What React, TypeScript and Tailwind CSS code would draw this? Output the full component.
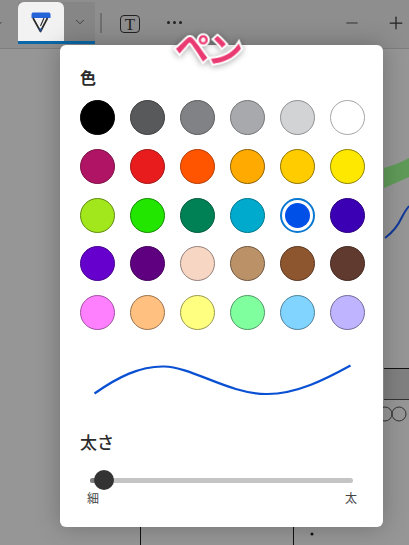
import { ChevronDown, Minus, Plus } from "lucide-react";

// パレットの色 (6列 x 5行)
const swatches = [
  { id: "black", cls: "bg-[#000000] border-black" },
  { id: "gray-1", cls: "bg-[#58595b] border-[#3c3d3e]" },
  { id: "gray-2", cls: "bg-[#808285] border-[#5a5b5d]" },
  { id: "gray-3", cls: "bg-[#a7a9ac] border-[#757678]" },
  { id: "gray-4", cls: "bg-[#d1d3d4] border-[#8f9091]" },
  { id: "white", cls: "bg-white border-[#a6a6a6]" },
  { id: "magenta", cls: "bg-[#b01464] border-[#7b0e46]" },
  { id: "red", cls: "bg-[#e81c1c] border-[#a21414]" },
  { id: "orange", cls: "bg-[#ff5500] border-[#b23b00]" },
  { id: "amber", cls: "bg-[#ffaa00] border-[#8a6000]" },
  { id: "gold", cls: "bg-[#ffcc00] border-[#8f7200]" },
  { id: "yellow", cls: "bg-[#ffe800] border-[#8f8200]" },
  { id: "lime", cls: "bg-[#a2e61c] border-[#5f8a10]" },
  { id: "green", cls: "bg-[#22e600] border-[#148a00]" },
  { id: "teal", cls: "bg-[#008055] border-[#005a3b]" },
  { id: "cyan", cls: "bg-[#00aacc] border-[#00778e]" },
  { id: "blue", cls: "bg-[#0050e8]", selected: true },
  { id: "indigo", cls: "bg-[#3c00b4] border-[#2a007e]" },
  { id: "violet", cls: "bg-[#6600cc] border-[#47008e]" },
  { id: "purple", cls: "bg-[#5f0080] border-[#42005a]" },
  { id: "peach", cls: "bg-[#f7d7c4] border-[#94807a]" },
  { id: "tan", cls: "bg-[#bb9167] border-[#705640]" },
  { id: "brown", cls: "bg-[#8e562e] border-[#5a3620]" },
  { id: "dark-brown", cls: "bg-[#603a2e] border-[#432820]" },
  { id: "pink", cls: "bg-[#ff80ff] border-[#a052a0]" },
  { id: "light-orange", cls: "bg-[#ffc080] border-[#997350]" },
  { id: "light-yellow", cls: "bg-[#ffff80] border-[#999950]" },
  { id: "mint", cls: "bg-[#80ff9f] border-[#4f9963]" },
  { id: "sky", cls: "bg-[#80d4ff] border-[#4f8299]" },
  { id: "lavender", cls: "bg-[#bfb4ff] border-[#736c99]" },
];

function PenIcon() {
  return (
    <svg width="24" height="26" viewBox="0 0 24 26" fill="none">
      <path d="M2.5 5 L3.5 3.5 H20.5 L21.5 5 V9 H2.5 Z" fill="#2563d8" />
      <path d="M4 9 L11.5 22.5 L18.5 9" stroke="#2b2b2b" strokeWidth="1.7" strokeLinejoin="round" />
      <path d="M11.5 17 L15 9" stroke="#2b2b2b" strokeWidth="1.1" />
      <path d="M9.8 19.5 L11.5 23 L13.2 19.5 Z" fill="#1f4fa8" />
    </svg>
  );
}

export default function App() {
  return (
    <div className="relative flex h-[545px] w-[409px] flex-col overflow-hidden bg-[#969696] font-['Noto_Sans_CJK_JP',sans-serif]">
      {/* ツールバー */}
      <header className="flex h-[49px] items-start border-b border-[#7e7e7e] bg-[#8e8e8e]">
        <ChevronDown className="mt-[18px] ml-[-8px] h-[12px] w-[12px] text-[#333333]" />
        <div className="mt-[2px] ml-[14px] flex h-[42px] border-b-[3px] border-[#0b68a8] bg-[#868686]">
          <button className="flex w-[46px] items-center justify-center rounded-t-[6px] bg-[#f2f2f2]">
            <PenIcon />
          </button>
          <button className="flex w-[31px] items-center justify-center">
            <ChevronDown className="h-[14px] w-[14px] text-[#333333]" strokeWidth={1.5} />
          </button>
        </div>
        <div className="mt-[13px] ml-[5px] h-[20px] w-[2px] bg-[#6f6f6f]" />
        <div className="mt-[15px] ml-[18px] flex h-[18px] w-[20px] items-center justify-center rounded-[4px] border border-[#222222] font-['Liberation_Serif',serif] text-[17px] leading-none text-[#222222]">
          T
        </div>
        <div className="mt-[21px] ml-[27px] flex gap-[3px]">
          <span className="h-[3px] w-[3px] rounded-full bg-[#222222]" />
          <span className="h-[3px] w-[3px] rounded-full bg-[#222222]" />
          <span className="h-[3px] w-[3px] rounded-full bg-[#222222]" />
        </div>
        <Minus className="mt-[14px] ml-[161px] h-[18px] w-[18px] text-[#333333]" strokeWidth={1.5} />
        <Plus className="mt-[13px] ml-[25px] h-[20px] w-[20px] text-[#222222]" strokeWidth={1.5} />
      </header>

      {/* 背景のキャンバス */}
      <div className="relative flex-1">
        <svg className="absolute inset-0" width="409" height="496" viewBox="0 49 409 496" fill="none">
          <path d="M384 168 Q398 164 409 158 V177 Q398 182 384 188 Z" fill="#5f9a58" />
          <path d="M385 238 Q396 230 402 217 Q405 211 409 206" stroke="#11389a" strokeWidth="2" />
          <rect x="384" y="368" width="25" height="31" fill="#808080" />
          <path d="M384 368.5 H409" stroke="#111111" />
          <path d="M384 399.5 H409" stroke="#333333" />
          <circle cx="385" cy="414" r="7" stroke="#333333" />
          <circle cx="399" cy="414" r="7" stroke="#333333" />
          <path d="M140.5 527 V545 M293.5 527 V545" stroke="#111111" />
          <circle cx="312" cy="534" r="1.5" fill="#111111" />
        </svg>
      </div>

      {/* ペンの設定パネル */}
      <div className="absolute top-[45px] left-[60px] flex h-[482px] w-[323px] flex-col rounded-[6px] bg-white px-[20px] pt-[20px] shadow-[0_0_24px_rgba(0,0,0,0.25)]">
        <h2 className="text-[16px] leading-[24px] font-bold text-[#2b2b2b]">色</h2>
        <div className="mt-[11px] grid grid-cols-[repeat(6,35px)] gap-x-[15px] gap-y-[13.75px]">
          {swatches.map((s) =>
            s.selected ? (
              <div key={s.id} className="flex h-[35px] w-[35px] items-center justify-center rounded-full border-[2px] border-[#0a78d0] bg-white">
                <div className={`h-[25px] w-[25px] rounded-full ${s.cls}`} />
              </div>
            ) : (
              <div key={s.id} className={`h-[35px] w-[35px] rounded-full border ${s.cls}`} />
            )
          )}
        </div>
        <svg className="mt-[29px] shrink-0" width="272" height="44" viewBox="0 0 272 44" fill="none">
          <path
            d="M14.5 34.5 C38 18 60 7 84 7.5 C112 8 148 34.5 186 35 C216 35.5 246 20 270.5 6.5"
            stroke="#0a50d2"
            strokeWidth="2.2"
          />
        </svg>
        <h2 className="mt-[27px] text-[17px] leading-[24px] font-medium text-[#2b2b2b]">太さ</h2>
        <div className="relative mt-[24px] ml-[10px] h-[5px] w-[263px] rounded-full bg-[#c4c4c4]">
          <div className="h-[5px] w-[14px] rounded-l-full bg-[#808080]" />
          <div className="absolute top-[-8px] left-[4px] h-[20px] w-[20px] rounded-full bg-[#333333]" />
        </div>
        <div className="mt-[7px] ml-[7px] flex w-[270px] justify-between text-[12px] leading-[16px] text-[#444444]">
          <span>細</span>
          <span>太</span>
        </div>
      </div>

      {/* 注釈ラベル */}
      <div className="absolute top-[23px] left-[175px] rotate-[6deg] text-[35px] leading-[48px] font-bold tracking-[-2px] text-[#ea3a72] [paint-order:stroke_fill] [-webkit-text-stroke:4px_#ffffff] drop-shadow-[0_1px_3px_rgba(0,0,0,0.35)]">
        ペン
      </div>
    </div>
  );
}
